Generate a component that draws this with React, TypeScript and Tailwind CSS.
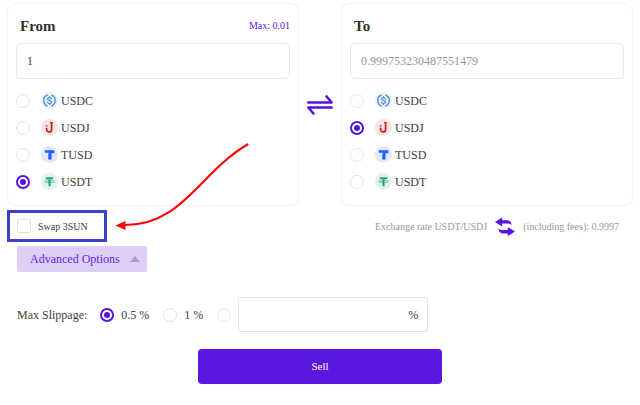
import { useState } from "react"

const tokens = ["USDC", "USDJ", "TUSD", "USDT"]

const radioClass =
    "size-[14px] shrink-0 appearance-none rounded-full border border-[#e3e3e3] bg-white bg-clip-content p-[2px] checked:border-2 checked:border-[#5713e0] checked:bg-[#5713e0]"

function TokenIcon({ token }: { token: string }) {
    return (
        <svg viewBox="0 0 17 17" className="size-[17px] shrink-0" aria-hidden="true">
            {token === "USDC" && (
                <g fill="none" stroke="#4a8fdc" strokeLinecap="round">
                    <circle cx="8.5" cy="8.5" r="8.5" fill="#e6f1fc" stroke="none" />
                    <path d="M6.2 3.2a5.8 5.8 0 0 0 0 10.6M10.8 3.2a5.8 5.8 0 0 1 0 10.6" strokeWidth="1.3" />
                    <path d="M10.4 6.9c-.2-.9-.9-1.3-1.9-1.3-1.1 0-1.9.5-1.9 1.4 0 2 3.9.9 3.9 3 0 .9-.8 1.4-2 1.4-1.1 0-1.9-.5-2-1.4M8.5 4.6v1M8.5 11.4v1" strokeWidth="1.2" />
                </g>
            )}
            {token === "USDJ" && (
                <g>
                    <circle cx="8.5" cy="8.5" r="8.5" fill="#f7e3e4" />
                    <path d="M10.6 3v7.4a2.5 2.5 0 0 1-2.5 2.5c-1.6 0-2.5-.9-2.5-2.4V8.8" fill="none" stroke="#bd2028" strokeWidth="1.7" />
                    <path d="M9 3h2.4v1.3H9zM4.8 6.2h1.6v1.4H4.8z" fill="#bd2028" />
                </g>
            )}
            {token === "TUSD" && (
                <g>
                    <circle cx="8.5" cy="8.5" r="8.5" fill="#e1e8fe" />
                    <path d="M6.4 4.2h6.9v3h-2.8v6.2H7.3V8.6c0-.9.4-1.5 1-1.9H6.400z" fill="#1f5cff" />
                    <path d="M3.8 4.2h3v2.5h-3z" fill="#1f5cff" />
                </g>
            )}
            {token === "USDT" && (
                <g>
                    <circle cx="8.5" cy="8.5" r="8.5" fill="#e1f3ed" />
                    <path d="M4.800 4.300h7.400v1.900H9.500v7h-2v-7H4.800z" fill="#26a17b" />
                    <ellipse cx="8.5" cy="8.6" rx="4.900" ry="1" fill="none" stroke="#26a17b" strokeWidth=".6" />
                </g>
            )}
        </svg>
    )
}

type PanelProps = {
    title: string
    name: string
    amount: string
    max?: string
    token: string
    muted?: boolean
    onAmount: (value: string) => void
    onToken: (value: string) => void
}

function SwapPanel({ title, name, amount, max, token, muted, onAmount, onToken }: PanelProps) {
    return (
        <section className="min-w-0 flex-1 rounded-lg border border-[#f2f2f2] px-2 pb-[10px]">
            <div className="flex h-[39px] items-center justify-between pt-1 pl-1">
                <h2 className="text-[15px] leading-5 font-bold text-[#303030]">{title}</h2>
                {max && (
                    <button type="button" className="text-[10px] text-[#5f22e0]">
                        Max: {max}
                    </button>
                )}
            </div>
            <input
                type="text"
                aria-label={`${title} amount`}
                value={amount}
                onChange={(e) => onAmount(e.target.value)}
                className={`h-9 w-full rounded-[5px] border border-[#e8e8e8] px-[10px] text-xs ${muted ? "text-[#999]" : "text-[#404040]"}`}
            />
            <div role="radiogroup" aria-label={`${title} token`} className="mt-2">
                {tokens.map((t) => (
                    <label key={t} className="flex h-[27px] items-center">
                        <input
                            type="radio"
                            name={name}
                            value={t}
                            checked={token === t}
                            onChange={() => onToken(t)}
                            className={`${radioClass} mr-[11px]`}
                        />
                        <TokenIcon token={t} />
                        <span className="pl-[3px] text-xs text-[#404040]">{t}</span>
                    </label>
                ))}
            </div>
        </section>
    )
}

export default function App() {
    const [fromAmount, setFromAmount] = useState("1")
    const [toAmount, setToAmount] = useState("0.999753230487551479")
    const [from, setFrom] = useState("USDT")
    const [to, setTo] = useState("USDJ")
    const [swap3Sun, setSwap3Sun] = useState(false)
    const [slippage, setSlippage] = useState("0.5")
    const [custom, setCustom] = useState("")

    const flip = () => {
        setFrom(to)
        setTo(from)
    }

    return (
        <main className="relative bg-white px-[7px] pt-[3px] pb-5 font-['Liberation_Serif',serif] text-[#404040]">
            <div className="flex items-center">
                <SwapPanel title="From" name="from" amount={fromAmount} max="0.01" token={from} onAmount={setFromAmount} onToken={setFrom} />
                <button type="button" aria-label="Swap direction" onClick={flip} className="flex w-[42px] justify-center">
                    <svg viewBox="0 0 26 20" className="h-5 w-[26px]" fill="none" stroke="#5713e0" strokeWidth="2.600" strokeLinecap="round" strokeLinejoin="round">
                        <path d="M1.300 7.500h23.300l-5-6" />
                        <path d="M24.700 12.500H1.400l5 6" />
                    </svg>
                </button>
                <SwapPanel title="To" name="to" amount={toAmount} token={to} muted onAmount={setToAmount} onToken={setTo} />
            </div>

            <div className="mt-1 flex items-center justify-between pr-[14px]">
                <label className="flex h-8 w-[100px] items-center gap-[7px] border-3 border-[#3a43c8] pl-[7px] text-[10px]">
                    <input
                        type="checkbox"
                        checked={swap3Sun}
                        onChange={(e) => setSwap3Sun(e.target.checked)}
                        className="size-[14px] shrink-0 appearance-none rounded-[1px] border border-[#e0e0e0] bg-white bg-clip-content p-[2px] checked:bg-[#5713e0]"
                    />
                    Swap 3SUN
                </label>
                <div className="flex items-center gap-2 text-[10px] text-[#999]">
                    <span>Exchange rate USDT/USDJ</span>
                    <button type="button" aria-label="Invert rate">
                        <svg viewBox="0 0 20 20" className="size-5" fill="#5713e0">
                            <path d="M0 6 7.200 1.400V4.200h4.300c2.900 0 4.800 1.600 5.200 5-1.300-1.300-2.800-1.700-5-1.700H7.200v2.900z" />
                            <path d="M20 15.600 12.800 20.200V17.400H8.500c-2.900 0-4.800-1.600-5.200-5 1.300 1.300 2.800 1.700 5 1.700h4.500v-2.900z" />
                        </svg>
                    </button>
                    <span>(including fees): 0.9997</span>
                </div>
            </div>

            <button type="button" aria-expanded="true" className="mt-1 ml-[10px] flex h-[26px] items-center gap-[10px] rounded-[2px] bg-[#decff8] pr-[7px] pl-[13px] text-xs text-[#6326e2]">
                Advanced Options
                <svg viewBox="0 0 10 6" className="h-[6px] w-[10px]" fill="#a99bc4">
                    <path d="M5 0l5 6H0z" />
                </svg>
            </button>

            <div role="radiogroup" aria-labelledby="slippage-label" className="mt-[25px] ml-[10px] flex items-center text-xs">
                <span id="slippage-label" className="mr-[13px]">
                    Max Slippage:
                </span>
                <label className="mr-[14px] flex items-center gap-[7px]">
                    <input type="radio" name="slippage" checked={slippage === "0.5"} onChange={() => setSlippage("0.5")} className={radioClass} />
                    0.5 %
                </label>
                <label className="mr-[14px] flex items-center gap-[7px]">
                    <input type="radio" name="slippage" checked={slippage === "1"} onChange={() => setSlippage("1")} className={radioClass} />
                    1 %
                </label>
                <input type="radio" name="slippage" aria-label="Custom slippage" checked={slippage === "custom"} onChange={() => setSlippage("custom")} className={radioClass} />
                <label className="ml-[7px] flex h-[35px] w-[190px] items-center rounded-[2px] border border-[#e5e5e5] pr-[9px] pl-2">
                    <input type="text" aria-label="Custom slippage percent" value={custom} onChange={(e) => setCustom(e.target.value)} className="min-w-0 flex-1 outline-none" />
                    %
                </label>
            </div>

            <button type="button" className="mx-auto mt-[17px] block h-[35px] w-[244px] rounded-[4px] bg-[#5a17e0] text-[11px] text-white">
                Sell
            </button>

            <svg viewBox="0 0 136 90" className="pointer-events-none absolute top-[141px] left-[114px] h-[90px] w-[136px]" aria-hidden="true">
                <path d="M133.500 3.500C86 31 68 85 10 84" fill="none" stroke="#fb0505" strokeWidth="2.200" strokeLinecap="round" />
                <path d="M1.500 84.500 11.500 80v9z" fill="#fb0505" />
            </svg>
        </main>
    )
}
